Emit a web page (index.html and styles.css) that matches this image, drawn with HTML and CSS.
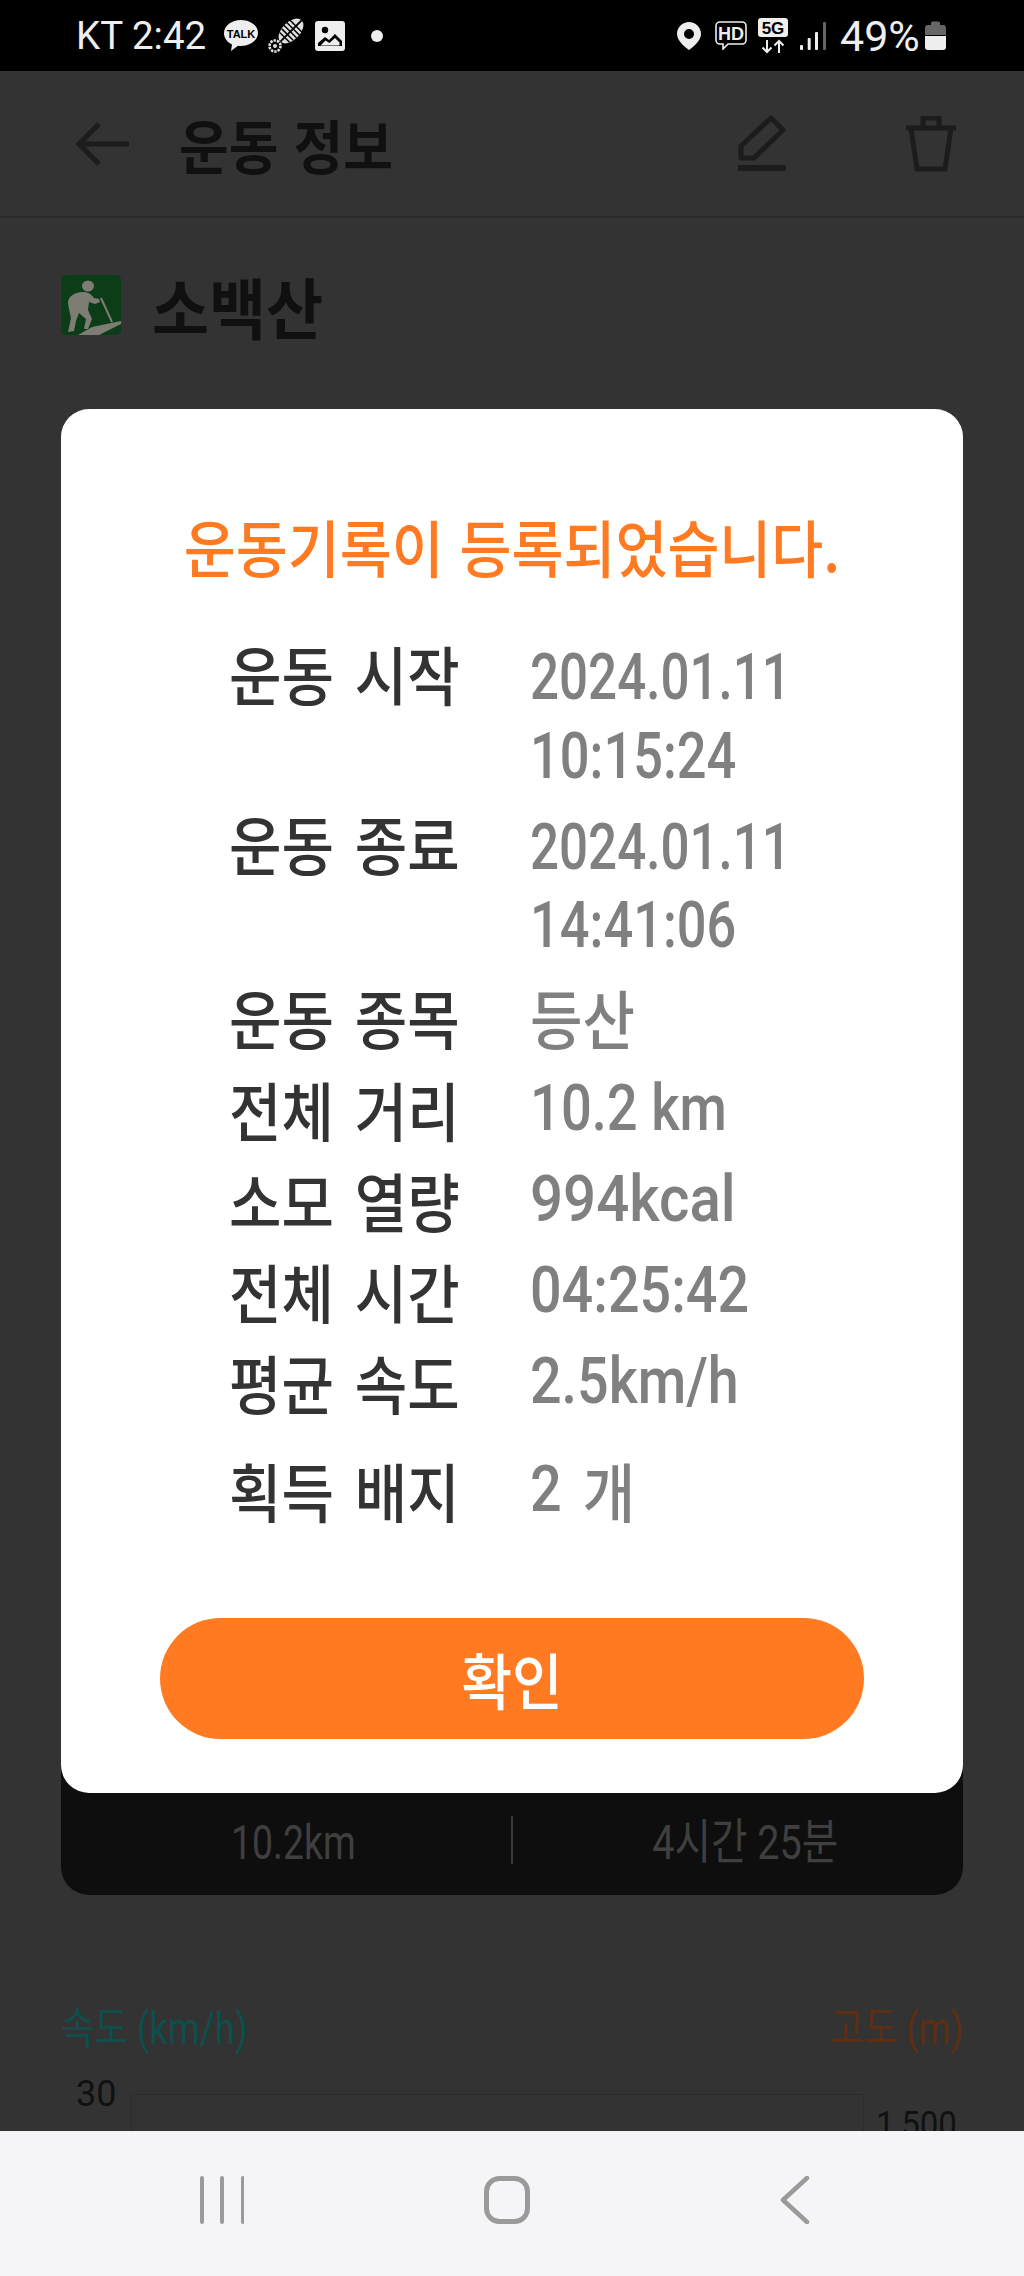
FILE: index.html
```html
<!DOCTYPE html>
<html lang="ko">
<head>
    <meta charset="UTF-8">
    <meta name="viewport" content="width=device-width, initial-scale=1.0">
    <title>운동 정보</title>
    <link rel="stylesheet" href="styles.css">
</head>

<body>
    <!-- Status bar -->
    <div class="status-bar">
        <span class="status-time">KT 2:42</span>
        <svg class="ic-talk" width="36" height="33" viewBox="0 0 36 33">
            <path d="M18 1C8.600 1 1 6.900 1 14.200c0 4.800 3.200 8.900 8 11.200L8 32l7-5.300c1 .1 2 .2 3 .2 9.400 0 17-5.900 17-13S27.400 1 18 1z" fill="#eee"/>
            <text x="18" y="18.500" class="talk-text">TALK</text>
        </svg>
        <svg class="ic-shoe" width="38" height="36" viewBox="0 0 38 36">
            <g transform="rotate(45 24 13)">
                <ellipse cx="24" cy="13" rx="9" ry="15" fill="#e0e0e0"/>
                <path d="M15 6h18M15 10h18M15 14h18M16 18h16M17 22h14" stroke="#000" stroke-width="1.500"/>
                <path d="M24 -2v30" stroke="#000" stroke-width="2"/>
            </g>
            <circle cx="8" cy="28" r="5.500" fill="none" stroke="#e0e0e0" stroke-width="2.600" stroke-dasharray="2.400 1"/>
            <circle cx="8" cy="28" r="2" fill="#e0e0e0"/>
        </svg>
        <svg class="ic-image" width="30" height="30" viewBox="0 0 30 30">
            <rect width="30" height="30" rx="3" fill="#eee"/>
            <circle cx="10" cy="9" r="3.200" fill="#000"/>
            <path d="M3 25v-3l7-6 4 3 6-6 7 7v5z" fill="#000"/>
            <path d="M5.500 24.500l5-5 4 2.500 5.500-5 4.500 4.500v3z" fill="#eee"/>
        </svg>
        <span class="status-dot"></span>

        <span class="status-right">
            <svg width="24" height="28" viewBox="0 0 24 28">
                <path fill-rule="evenodd" d="M12 0C5.400 0 0 5.300 0 11.800 0 19 8 25 12 28c4-3 12-9 12-16.200C24 5.300 18.600 0 12 0zm0 7a5 5 0 1 1 0 10 5 5 0 0 1 0-10z" fill="#eee"/>
            </svg>
            <svg class="ic-hd" width="32" height="29" viewBox="0 0 32 29">
                <path d="M5 1h22a4 4 0 0 1 4 4v14a4 4 0 0 1-4 4H13l-5 5v-5H5a4 4 0 0 1-4-4V5a4 4 0 0 1 4-4z" fill="none" stroke="#eee" stroke-width="1.600"/>
                <text x="16" y="18.500" class="hd-text">HD</text>
            </svg>
            <svg class="ic-5g" width="30" height="36" viewBox="0 0 30 36">
                <rect width="30" height="19" rx="3" fill="#eee"/>
                <text x="15" y="16" class="g5-text">5G</text>
                <path d="M9 22v12M4.500 29.500L9 34l4.500-4.500M21 35V23M16.500 27.500L21 23l4.500 4.500" fill="none" stroke="#eee" stroke-width="2"/>
            </svg>
            <svg class="ic-signal" width="26" height="28" viewBox="0 0 26 28">
                <rect x="0" y="23" width="3" height="5" rx="1" fill="#eee"/>
                <rect x="7.700" y="16" width="3" height="12" rx="1" fill="#eee"/>
                <rect x="15" y="10" width="3" height="18" rx="1" fill="#eee"/>
                <rect x="23" y="0" width="3" height="28" rx="1" fill="#666"/>
            </svg>
            <span class="status-batt">49%</span>
            <svg class="ic-batt" width="21" height="29" viewBox="0 0 21 29">
                <path d="M6 2a1.500 1.500 0 0 1 1.500-1.500h6A1.500 1.500 0 0 1 15 2v2h3a3 3 0 0 1 3 3v7H0V7a3 3 0 0 1 3-3h3z" fill="#666"/>
                <path d="M0 15h21v11a3 3 0 0 1-3 3H3a3 3 0 0 1-3-3z" fill="#eee"/>
            </svg>
        </span>
    </div>

    <!-- Page behind the dialog -->
    <div class="content">
        <div class="app-bar">
            <svg class="ic-back" width="54" height="44" viewBox="0 0 54 44">
                <path d="M53 22H4M23 2L3 22l20 20" fill="none" stroke="#1c1c1c" stroke-width="5"/>
            </svg>
            <h1 class="app-title">운동 정보</h1>
            <svg class="ic-edit" width="48" height="57" viewBox="0 0 48 57">
                <path d="M33 3l12 12-29 28H3V31z" fill="none" stroke="#1c1c1c" stroke-width="5" stroke-linejoin="round"/>
                <rect y="50" width="48" height="6" fill="#1c1c1c"/>
            </svg>
            <svg class="ic-trash" width="52" height="56" viewBox="0 0 52 56">
                <path d="M1 12h50M6 12l6 41h28l6-41M18 11V2h16v9" fill="none" stroke="#1c1c1c" stroke-width="5"/>
            </svg>
        </div>

        <div class="mountain">
            <svg class="ic-hiker" width="60" height="60" viewBox="0 0 60 60">
                <rect width="60" height="60" rx="5" fill="#0c3c18"/>
                <ellipse cx="27" cy="11" rx="6" ry="5.500" fill="#7d7d74"/>
                <path d="M7 28c0-7 7-11 15-11 5 0 8 2 11 6l5 1 1 3-5 2-6-2-1 8 4 9-4 10h-4l2-10-7-6-3 8-2 10-6 1 3-14-2-9z" fill="#7d7d74"/>
                <path d="M40 23l11 24" stroke="#7d7d74" stroke-width="2" fill="none"/>
                <path d="M17 60l14-8 29-6v3L38 60z" fill="#7d7d74"/>
            </svg>
            <h2 class="mountain-name">소백산</h2>
        </div>

        <div class="summary-card">
            <span class="summary-item"><span class="squeeze">10.2km</span></span>
            <span class="summary-sep"></span>
            <span class="summary-item"><span class="squeeze squeeze-ko">4시간 25분</span></span>
        </div>

        <div class="chart-head">
            <span class="speed-label">속도 (km/h)</span>
            <span class="alt-label">고도 (m)</span>
        </div>
        <div class="chart">
            <span class="chart-left">30</span>
            <div class="chart-box"></div>
            <span class="chart-right">1,500</span>
        </div>
    </div>

    <!-- Navigation bar -->
    <div class="nav-bar">
        <svg width="46" height="48" viewBox="0 0 46 48">
            <path d="M4 2v44M24 2v44M45 2v44" stroke="#9a9a9a" stroke-width="4" stroke-linecap="round"/>
        </svg>
        <svg class="nav-home" width="46" height="48" viewBox="0 0 46 48">
            <rect x="2.500" y="2.500" width="41" height="43" rx="13" fill="none" stroke="#9a9a9a" stroke-width="5"/>
        </svg>
        <svg class="nav-back" width="30" height="48" viewBox="0 0 30 48">
            <path d="M27 2L3 24l24 22" fill="none" stroke="#9a9a9a" stroke-width="4.500" stroke-linecap="round" stroke-linejoin="round"/>
        </svg>
    </div>

    <!-- Dialog -->
    <div class="overlay-dialog">
        <div class="dialog-title">운동기록이 등록되었습니다.</div>
        <div class="record-list">
            <div class="record-label">운동 시작</div>
            <div class="record-value"><span class="num num-date">2024.01.11</span><br><span class="num num-time">10:15:24</span></div>
            <div class="record-label">운동 종료</div>
            <div class="record-value"><span class="num num-date">2024.01.11</span><br><span class="num num-time">14:41:06</span></div>
            <div class="record-label">운동 종목</div>
            <div class="record-value"><span class="hangul">등산</span></div>
            <div class="record-label">전체 거리</div>
            <div class="record-value"><span class="num num-dist">10.2 km</span></div>
            <div class="record-label">소모 열량</div>
            <div class="record-value"><span class="num num-wide">994kcal</span></div>
            <div class="record-label">전체 시간</div>
            <div class="record-value"><span class="num">04:25:42</span></div>
            <div class="record-label">평균 속도</div>
            <div class="record-value"><span class="num">2.5km/h</span></div>
            <div class="record-label last-row">획득 배지</div>
            <div class="record-value last-row"><span class="num">2</span> <span class="hangul">개</span></div>
        </div>
        <button class="confirm-btn"><span>확인</span></button>
    </div>
</body>
</html>
```

FILE: styles.css
```css
/* Base page */
body {
    margin: 0;
    width: 1024px;
    height: 2276px;
    position: relative;
    overflow: hidden;
    display: flex;
    flex-direction: column;
    background-color: #333;
    font-family: "Noto Sans CJK KR", "Noto Sans", sans-serif;
}

/* Status bar */
.status-bar {
    height: 71px;
    flex: none;
    background-color: #000;
    color: #eee;
    display: flex;
    align-items: center;
    padding-left: 76px;
    font-family: Roboto, "Noto Sans", sans-serif;
    font-size: 38.500px;
}

.status-time {
    width: 147px;
    white-space: nowrap;
}

.ic-shoe {
    margin-left: 8px;
}

.ic-image {
    margin-left: 10px;
}

.status-dot {
    width: 12px;
    height: 12px;
    margin-left: 26px;
    border-radius: 50%;
    background-color: #eee;
}

.status-right {
    margin-left: 294px;
    display: flex;
    align-items: center;
}

.ic-hd {
    margin-left: 14px;
}

.ic-5g {
    margin-left: 11px;
}

.ic-signal {
    margin-left: 12px;
}

.status-batt {
    margin-left: 14px;
    width: 85px;
    font-size: 43px;
}

.talk-text {
    font: 700 11px "Liberation Sans", sans-serif;
    fill: #000;
    text-anchor: middle;
}

.hd-text {
    font: 700 18px "Liberation Sans", sans-serif;
    fill: #eee;
    text-anchor: middle;
}

.g5-text {
    font: 700 17px "Liberation Sans", sans-serif;
    fill: #000;
    text-anchor: middle;
}

/* Page behind the dialog */
.content {
    flex: 1;
    min-height: 0;
    overflow: hidden;
}

.app-bar {
    height: 147px;
    box-sizing: border-box;
    border-bottom: 2px solid #2b2b2b;
    display: flex;
    align-items: center;
    padding-left: 76px;
}

.app-title {
    margin: 0 0 0 49px;
    flex: 1;
    font-size: 54px;
    font-weight: 700;
    color: #101010;
    transform: scaleY(1.08);
    transform-origin: left center;
}

.ic-trash {
    margin: 0 67px 0 119px;
}

.mountain {
    display: flex;
    align-items: center;
    margin-top: 57px;
    padding-left: 61px;
}

.mountain-name {
    margin: 0 0 0 31px;
    height: 60px;
    line-height: 60px;
    font-size: 62px;
    font-weight: 700;
    color: #101010;
    transform: scaleY(1.06);
    transform-origin: left center;
}

.summary-card {
    margin: 1420px 61px 0;
    height: 140px;
    background-color: #0e0e0e;
    border-radius: 0 0 28px 28px;
    display: flex;
    align-items: flex-start;
    color: #3f3f3f;
    font-family: Roboto, "Noto Sans CJK KR", sans-serif;
    font-size: 44px;
}

.summary-item {
    flex: 1;
    margin-top: 41px;
    padding-left: 14px;
    text-align: center;
    line-height: 92px;
}

.squeeze {
    display: inline-block;
    transform: scale(.85, 1.1);
}

.squeeze-ko {
    transform: scale(.9, 1.1);
}

.summary-sep {
    width: 2px;
    height: 48px;
    margin-top: 61px;
    background-color: #3a3a3a;
}

.chart-head {
    margin: 111px 61px 0;
    display: flex;
    justify-content: space-between;
    font-family: Roboto, "Noto Sans CJK KR", sans-serif;
    font-size: 40px;
    line-height: 48px;
}

.speed-label {
    color: #0e4f4c;
    transform: scale(.91, 1.1);
    transform-origin: left center;
}

.alt-label {
    color: #5e2e12;
    transform: scale(.91, 1.1);
    transform-origin: right center;
}

.chart {
    margin-top: 18px;
    display: flex;
    align-items: flex-start;
    padding-left: 76px;
    color: #111;
    font-family: Roboto, sans-serif;
    font-size: 36px;
    line-height: 44px;
}

.chart-left {
    width: 55px;
}

.chart-box {
    width: 731px;
    height: 300px;
    margin-top: 22px;
    border: 1px solid #2c2c2c;
}

.chart-right {
    margin: 31px 0 0 12px;
    transform: scaleX(.92);
    transform-origin: left center;
}

/* Navigation bar */
.nav-bar {
    height: 145px;
    flex: none;
    box-sizing: border-box;
    background-color: #f5f5f7;
    padding: 0 0 8px 198px;
    display: flex;
    align-items: center;
}

.nav-home {
    margin-left: 240px;
}

.nav-back {
    margin-left: 250px;
}

/* Dialog */
.overlay-dialog {
    position: absolute;
    left: 61px;
    top: 409px;
    width: 902px;
    height: 1384px;
    box-sizing: border-box;
    padding-top: 97px;
    background-color: #fff;
    border-radius: 28px;
    display: flex;
    flex-direction: column;
    align-items: center;
}

.dialog-title {
    height: 83px;
    line-height: 80px;
    font-size: 56.500px;
    font-weight: 500;
    color: #ff7a21;
    white-space: nowrap;
    transform: scaleY(1.1);
}

.record-list {
    align-self: flex-start;
    margin: 49px 0 0 168px;
    display: grid;
    grid-template-columns: 301px auto;
    row-gap: 12.700px;
    line-height: 78.500px;
}

.record-label {
    font-size: 57px;
    font-weight: 500;
    word-spacing: 5px;
    color: #333;
    white-space: nowrap;
    transform: scaleY(1.12);
}

.record-value {
    font-family: Roboto, "Noto Sans CJK KR", sans-serif;
    font-size: 64.700px;
    font-weight: 500;
    color: #808080;
    white-space: nowrap;
}

/* Digits of the reference are narrower than Roboto, so squeeze them */
.num {
    display: inline-block;
    transform: scaleX(.86);
    transform-origin: left center;
}

.num-date {
    transform: scaleX(.79);
}

.num-time {
    transform: scaleX(.81);
}

.num-dist {
    transform: scaleX(.84);
}

.num-wide {
    transform: scaleX(.9);
}

.hangul {
    display: inline-block;
    vertical-align: top;
    font-family: "Noto Sans CJK KR", sans-serif;
    font-size: 57px;
    transform: scaleY(1.12);
}

.last-row {
    margin-top: 17px;
}

.confirm-btn {
    width: 704px;
    height: 121px;
    margin-top: 89px;
    padding: 0;
    border: none;
    border-radius: 61px;
    background-color: #ff7a21;
    color: #fff;
    font-family: inherit;
    font-size: 55px;
    font-weight: 500;
}

.confirm-btn span {
    display: inline-block;
    transform: scaleY(1.12);
}
```
